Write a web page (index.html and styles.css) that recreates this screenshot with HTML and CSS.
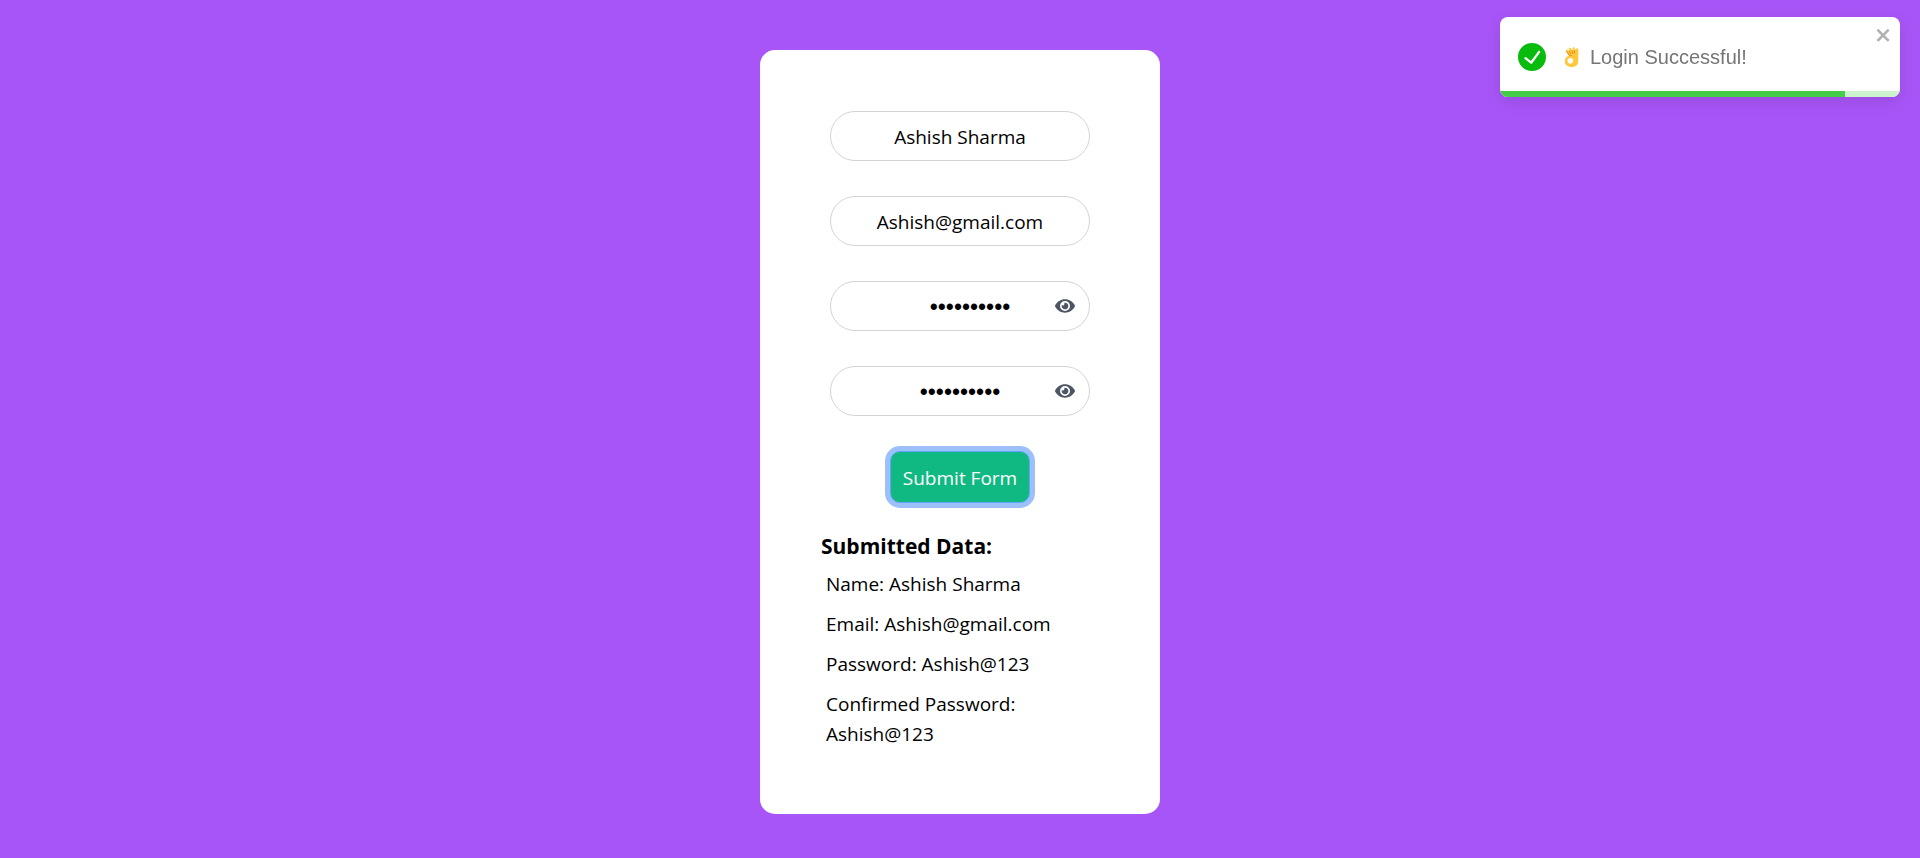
FILE: index.html
```html
<!DOCTYPE html>
<html lang="en">
<head>
<meta charset="utf-8">
<meta name="viewport" content="width=device-width, initial-scale=1">
<title>Form</title>
<link rel="stylesheet" href="styles.css">
</head>
<body>
<main class="page">
  <section class="card">
    <form class="form">
      <div class="field"><input class="input" type="text" aria-label="Name" value="Ashish Sharma"></div>
      <div class="field"><input class="input" type="text" aria-label="Email" value="Ashish@gmail.com"></div>
      <div class="field">
        <input class="input input-password input-shifted" type="password" aria-label="Password" value="Ashish@123">
        <button class="eye" type="button" aria-label="Show password">
          <svg viewBox="0 0 576 512"><path d="M572.52 241.4C518.29 135.59 410.93 64 288 64S57.68 135.64 3.48 241.41a32.35 32.35 0 0 0 0 29.19C57.71 376.41 165.07 448 288 448s230.32-71.64 284.52-177.41a32.35 32.35 0 0 0 0-29.19zM288 400a144 144 0 1 1 144-144 143.93 143.93 0 0 1-144 144zm0-240a95.31 95.31 0 0 0-25.31 3.79 47.85 47.85 0 0 1-66.9 66.9A95.78 95.78 0 1 0 288 160z"/></svg>
        </button>
      </div>
      <div class="field">
        <input class="input input-password" type="password" aria-label="Confirm password" value="Ashish@123">
        <button class="eye" type="button" aria-label="Show confirmed password">
          <svg viewBox="0 0 576 512"><path d="M572.52 241.4C518.29 135.59 410.93 64 288 64S57.68 135.64 3.48 241.41a32.35 32.35 0 0 0 0 29.19C57.71 376.41 165.07 448 288 448s230.32-71.64 284.52-177.41a32.35 32.35 0 0 0 0-29.19zM288 400a144 144 0 1 1 144-144 143.93 143.93 0 0 1-144 144zm0-240a95.31 95.31 0 0 0-25.31 3.79 47.85 47.85 0 0 1-66.9 66.9A95.78 95.78 0 1 0 288 160z"/></svg>
        </button>
      </div>
      <button class="submit" type="submit">Submit Form</button>
    </form>
    <div class="result">
      <h2 class="result-title">Submitted Data:</h2>
      <p class="result-line">Name: Ashish Sharma</p>
      <p class="result-line">Email: Ashish@gmail.com</p>
      <p class="result-line">Password: Ashish@123</p>
      <p class="result-line">Confirmed Password: Ashish@123</p>
    </div>
  </section>
</main>
<div class="toast" role="alert">
  <div class="toast-body">
    <svg class="toast-icon" viewBox="0 0 24 24"><path d="M12 0a12 12 0 1012 12A12.014 12.014 0 0012 0zm6.927 8.2l-6.845 9.289a1.011 1.011 0 01-1.43.188l-4.888-3.908a1 1 0 111.25-1.562l4.076 3.261 6.227-8.451a1 1 0 111.61 1.183z"/></svg>
    <svg class="toast-hand" viewBox="0 0 15 20" role="img" aria-label="OK hand">
      <path fill="#ffc83d" d="M4.800 8.400 2.200 4.200C1.600 2.800 3 1.900 3.900 2.900L5.200 4.300 4.900 1.800C4.800.5 6.600.2 7.100 1.400L8 3.600 8.700 1.100C9 0 10.700.1 10.700 1.400L10.600 3.500 12.200 1.700C13.200.700 14.600 1.600 14.400 2.900L14.200 15C14.200 18 11 20 7.500 20 3.500 20 .800 17.500.800 14.200.800 11 3 9 5.500 9L7.200 8.600Z"/>
      <path fill="none" stroke="#d67d00" stroke-width=".8" stroke-linecap="round" d="M2.500 4.300 5 8.300 7.200 8.500M5.200 4.200 6.400 6.600M8 3.800 8.300 6.300M10.600 3.700 10.200 6.300"/>
      <circle cx="6.300" cy="13.800" r="2.800" fill="#fff"/>
    </svg>
    <span class="toast-text">Login Successful!</span>
  </div>
  <button class="toast-close" type="button" aria-label="close">
    <svg viewBox="0 0 14 16"><path fill-rule="evenodd" d="M7.71 8.23l3.75 3.75-1.48 1.48-3.75-3.75-3.75 3.75L1 11.98l3.75-3.75L1 4.48 2.48 3l3.75 3.75L9.98 3l1.480 1.480-3.750 3.750z"/></svg>
  </button>
  <div class="toast-track"><div class="toast-bar" style="width:86.25%"></div></div>
</div>
</body>
</html>
```
FILE: styles.css
```css
* { box-sizing: border-box; }
body {
  margin: 0;
  background: #a855f7;
  color: #000;
  font: 19px/30px "Open Sans", "Noto Sans", sans-serif;
}
.page {
  min-height: 100vh;
  padding: 50px 20px 44px;
  display: flex;
  justify-content: center;
  align-items: flex-start;
}
.card {
  width: 100%;
  max-width: 400px;
  padding: 61px 60px 60px;
  background: #fff;
  border-radius: 15px;
}
.form {
  display: flex;
  flex-direction: column;
  align-items: center;
  gap: 35px;
  padding: 0 10px;
}
.field { position: relative; width: 100%; }
.input {
  display: block;
  width: 100%;
  height: 50px;
  padding: 2px 10px 0;
  border: 1px solid #d3d3d3;
  border-radius: 25px;
  background: #fff;
  color: #000;
  font: inherit;
  text-align: center;
  outline: none;
}
.input-password { font-family: "Liberation Sans", Arial, sans-serif; font-size: 23px; }
.input-shifted { padding-left: 30px; }
.eye {
  position: absolute;
  top: 15px;
  right: 15px;
  width: 20px;
  height: 20px;
  padding: 0;
  border: 0;
  background: none;
  cursor: pointer;
}
.eye svg { display: block; width: 20px; height: 20px; fill: #4b5563; }
.submit {
  height: 52px;
  padding: 2px 12px 0;
  border: 1px solid #60a5fa;
  border-radius: 10px;
  background: #10b981;
  color: #fff;
  font: inherit;
  box-shadow: 0 0 0 5px #9dc0fa;
  outline: none;
  cursor: pointer;
}
.result { margin-top: 26px; padding-left: 1px; }
.result-title { margin: 0; font-size: 21px; line-height: 35px; font-weight: 700; }
.result-line { margin: 0; padding: 5px; }
.toast {
  position: fixed;
  top: 17px;
  right: 20px;
  width: 400px;
  max-width: calc(100vw - 40px);
  height: 80px;
  border-radius: 8px;
  overflow: hidden;
  background: #fff;
  color: #757575;
  font: 20px/30px "Liberation Sans", Arial, sans-serif;
  box-shadow: 0 5px 15px rgba(0, 0, 0, .1);
}
.toast-body { display: flex; align-items: center; height: 80px; padding: 0 18px; }
.toast-icon { width: 28px; height: 28px; margin-right: 18px; fill: #07bc0c; }
.toast-hand { width: 15px; height: 20px; margin-right: 11px; }
.toast-close {
  position: absolute;
  top: 8px;
  right: 7px;
  padding: 0;
  border: 0;
  background: none;
  opacity: .3;
  cursor: pointer;
}
.toast-close svg { display: block; width: 18px; height: 20px; }
.toast-track {
  position: absolute;
  left: 0;
  right: 0;
  bottom: 0;
  height: 6px;
  background: #cdf2ce;
}
.toast-bar { height: 100%; background: #44cb48; }
```
